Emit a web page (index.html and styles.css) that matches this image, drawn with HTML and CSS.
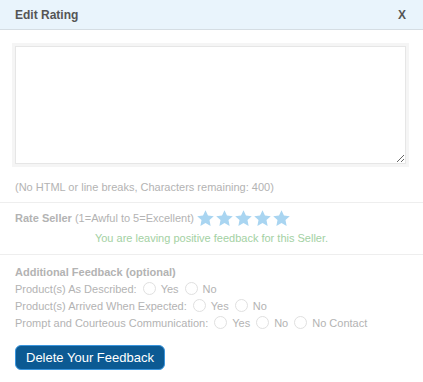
FILE: index.html
```html
<!DOCTYPE html>
<html lang="en">
<head>
  <meta charset="UTF-8" />
  <title>Edit Rating</title>
  <link rel="stylesheet" href="styles.css">
</head>
<body>

<div class="dialog">
  <div class="dialog-head">
    <span class="dialog-title">Edit Rating</span>
    <span class="dialog-close">X</span>
  </div>

  <div class="section">
    <div class="text-wrap">
      <textarea class="comment"></textarea>
    </div>
    <p class="hint">(No HTML or line breaks, Characters remaining: 400)</p>
  </div>

  <div class="section rate">
    <div class="rate-line">
      <span class="strong">Rate Seller</span>&nbsp;(1=Awful to 5=Excellent)
      <span class="stars">
        <svg viewBox="0 0 20 20"><path d="M10 1.2l2.6 5.6 6.1.7-4.5 4.2 1.2 6.1L10 14.8l-5.4 3 1.2-6.1L1.3 7.5l6.1-.7z"/></svg>
        <svg viewBox="0 0 20 20"><path d="M10 1.2l2.6 5.6 6.1.7-4.5 4.2 1.2 6.1L10 14.8l-5.4 3 1.2-6.1L1.3 7.5l6.1-.7z"/></svg>
        <svg viewBox="0 0 20 20"><path d="M10 1.2l2.6 5.6 6.1.7-4.5 4.2 1.2 6.1L10 14.8l-5.4 3 1.2-6.1L1.3 7.5l6.1-.7z"/></svg>
        <svg viewBox="0 0 20 20"><path d="M10 1.2l2.6 5.6 6.1.7-4.5 4.2 1.2 6.1L10 14.8l-5.4 3 1.2-6.1L1.3 7.5l6.1-.7z"/></svg>
        <svg viewBox="0 0 20 20"><path d="M10 1.2l2.6 5.6 6.1.7-4.5 4.2 1.2 6.1L10 14.8l-5.4 3 1.2-6.1L1.3 7.5l6.1-.7z"/></svg>
      </span>
    </div>
    <p class="positive">You are leaving positive feedback for this Seller.</p>
  </div>

  <div class="section extra">
    <p class="strong">Additional Feedback (optional)</p>
    <div class="q-row">Product(s) As Described:
      <label><span class="radio"></span>Yes</label>
      <label><span class="radio"></span>No</label>
    </div>
    <div class="q-row">Product(s) Arrived When Expected:
      <label><span class="radio"></span>Yes</label>
      <label><span class="radio"></span>No</label>
    </div>
    <div class="q-row">Prompt and Courteous Communication:
      <label><span class="radio"></span>Yes</label>
      <label><span class="radio"></span>No</label>
      <label><span class="radio"></span>No Contact</label>
    </div>
  </div>

  <div class="actions">
    <button class="btn-delete">Delete Your Feedback</button>
  </div>
</div>

</body>
</html>
```

FILE: styles.css
```css
body {
  margin: 0;
  font-family: "Liberation Sans", Arial, sans-serif;
  font-size: 11px;
  color: #b3b3b3;
  background: #fff;
}
p {
  margin: 0;
}
.dialog {
  width: 423px;
}
.dialog-head {
  display: flex;
  align-items: center;
  justify-content: space-between;
  padding: 0 17px 0 15px;
  background: #e9f4fc;
  border-bottom: 1px solid #d5dde3;
  box-sizing: border-box;
  height: 30px;
  color: #555;
  font-size: 12px;
  font-weight: bold;
}
.section {
  border-bottom: 1px solid #eeeeee;
}
.text-wrap {
  margin: 13px 14px 0 12px;
  padding: 3px;
  background: #f5f5f5;
}
.comment {
  display: block;
  width: 100%;
  height: 118px;
  box-sizing: border-box;
  border: 1px solid #e6e6e6;
  background: #fff;
  resize: vertical;
  margin: 0;
}
.hint {
  padding: 13px 15px 8px;
  line-height: 14px;
}
.strong {
  font-weight: bold;
}
.rate {
  padding: 5px 15px 9px;
}
.rate-line {
  display: flex;
  align-items: center;
  height: 20px;
}
.stars {
  display: flex;
  margin-left: 2px;
}
.stars svg {
  width: 19px;
  height: 19px;
  fill: #a9d5f1;
}
.positive {
  color: #a3d1a3;
  text-align: center;
  line-height: 14px;
  margin-top: 3px;
}
.extra {
  border-bottom: none;
  padding: 9px 15px 0;
  line-height: 16px;
}
.q-row {
  display: flex;
  align-items: center;
  height: 17px;
}
.q-row label {
  display: flex;
  align-items: center;
  margin-left: 6px;
}
.radio {
  width: 11px;
  height: 11px;
  border: 1px solid #e0e0e0;
  border-radius: 50%;
  margin-right: 5px;
  background: #fff;
}
.actions {
  padding: 14px 15px 0;
}
.btn-delete {
  height: 25px;
  padding: 0 10px;
  border: 1px solid #3a95dd;
  border-radius: 6px;
  background: #0c5a93;
  color: #fff;
  font-family: "Liberation Sans", Arial, sans-serif;
  font-size: 13px;
}
```
